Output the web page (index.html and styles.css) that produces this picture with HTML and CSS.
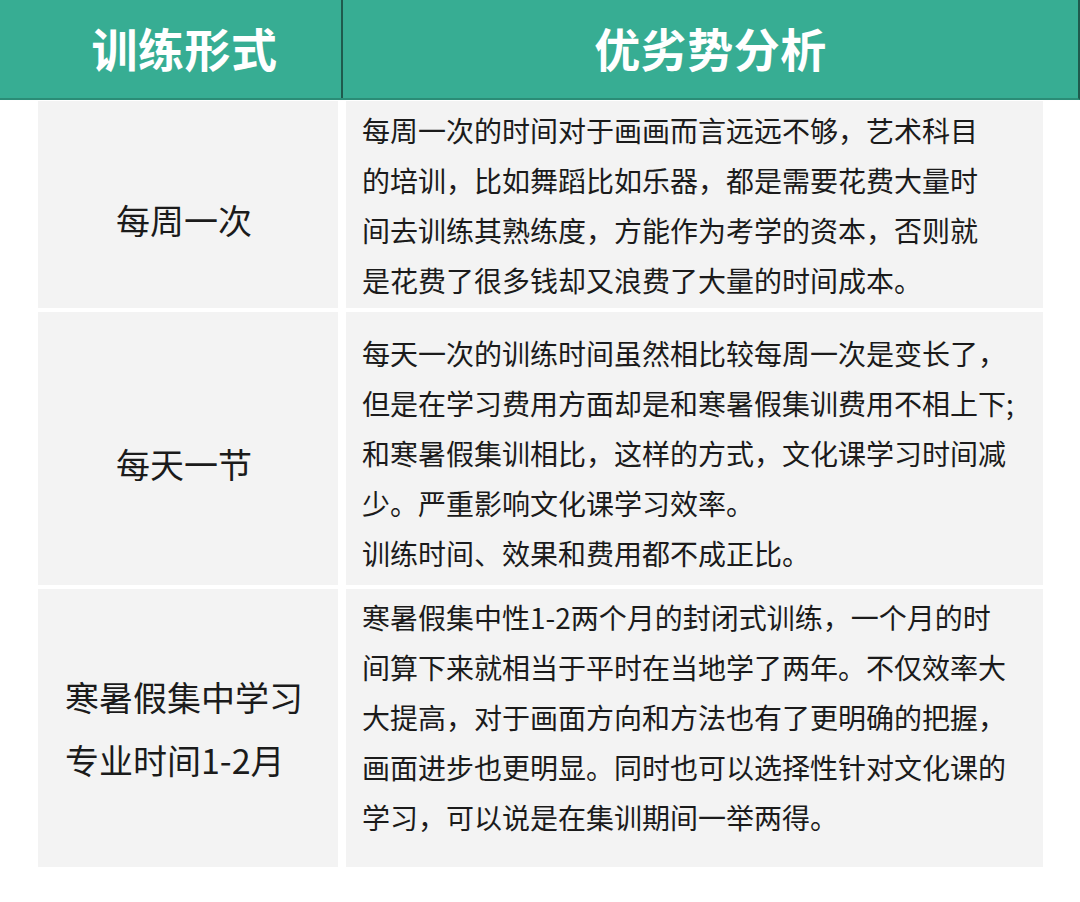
FILE: index.html
```html
<!DOCTYPE html>
<html lang="zh-CN">
<head>
<meta charset="utf-8">
<link rel="stylesheet" href="styles.css">
</head>
<body>
<div class="table">
  <div class="head">
    <div class="hcell hleft">训练形式</div>
    <div class="hcell hright">优劣势分析</div>
  </div>
  <div class="rows">
    <div class="row r1">
      <div class="cell left"><div class="ltext">每周一次</div></div>
      <div class="cell right"><div class="rtext">
        <div>每周一次的时间对于画画而言远远不够，艺术科目</div>
        <div>的培训，比如舞蹈比如乐器，都是需要花费大量时</div>
        <div>间去训练其熟练度，方能作为考学的资本，否则就</div>
        <div>是花费了很多钱却又浪费了大量的时间成本。</div>
      </div></div>
    </div>
    <div class="row r2">
      <div class="cell left"><div class="ltext">每天一节</div></div>
      <div class="cell right"><div class="rtext">
        <div>每天一次的训练时间虽然相比较每周一次是变长了，</div>
        <div>但是在学习费用方面却是和寒暑假集训费用不相上下;</div>
        <div>和寒暑假集训相比，这样的方式，文化课学习时间减</div>
        <div>少。严重影响文化课学习效率。</div>
        <div>训练时间、效果和费用都不成正比。</div>
      </div></div>
    </div>
    <div class="row r3">
      <div class="cell left"><div class="ltext multi">寒暑假集中学习<br>专业时间1-2月</div></div>
      <div class="cell right"><div class="rtext">
        <div>寒暑假集中性1-2两个月的封闭式训练，一个月的时</div>
        <div>间算下来就相当于平时在当地学了两年。不仅效率大</div>
        <div>大提高，对于画面方向和方法也有了更明确的把握，</div>
        <div>画面进步也更明显。同时也可以选择性针对文化课的</div>
        <div>学习，可以说是在集训期间一举两得。</div>
      </div></div>
    </div>
  </div>
</div>
</body>
</html>
```
FILE: styles.css
```css
html, body {
  margin: 0;
  padding: 0;
  background: #ffffff;
}
body {
  width: 1080px;
  height: 902px;
  overflow: hidden;
  font-family: "Noto Sans CJK SC", "Noto Sans", sans-serif;
  color: #1b1b1b;
}
.head {
  display: flex;
  width: 1078px;
  height: 98px;
  background: #37ad93;
  border-bottom: 2px solid #2b8c76;
  border-right: 2px solid #1f5a4d;
}
.hcell {
  display: flex;
  align-items: center;
  justify-content: center;
  color: #ffffff;
  font-weight: 700;
  font-size: 46px;
  letter-spacing: 0.5px;
  padding-bottom: 5px;
  box-sizing: border-box;
}
.hleft {
  width: 343px;
  padding-left: 28px;
  border-right: 2px solid #1f5a4d;
}
.hright {
  flex: 1;
}
.rows {
  display: flex;
  flex-direction: column;
  gap: 4px;
  padding: 1px 0 0 38px;
}
.row {
  display: grid;
  grid-template-columns: 300px 697px;
  column-gap: 8px;
}
.r1 { height: 207px; }
.r2 { height: 273px; }
.r3 { height: 278px; }
.cell {
  background: #f3f3f3;
  display: flex;
  align-items: center;
}
.left {
  justify-content: center;
  padding-right: 8px;
}
.ltext {
  font-size: 34px;
  line-height: 63px;
  text-align: left;
  padding-top: 30px;
}
.ltext.multi {
  padding-top: 0;
}
.right {
  padding-left: 16px;
}
.rtext {
  font-size: 28px;
  line-height: 50px;
  white-space: nowrap;
}
.r2 .rtext { padding-top: 8px; }
.r3 .rtext { padding-bottom: 22px; }
```
